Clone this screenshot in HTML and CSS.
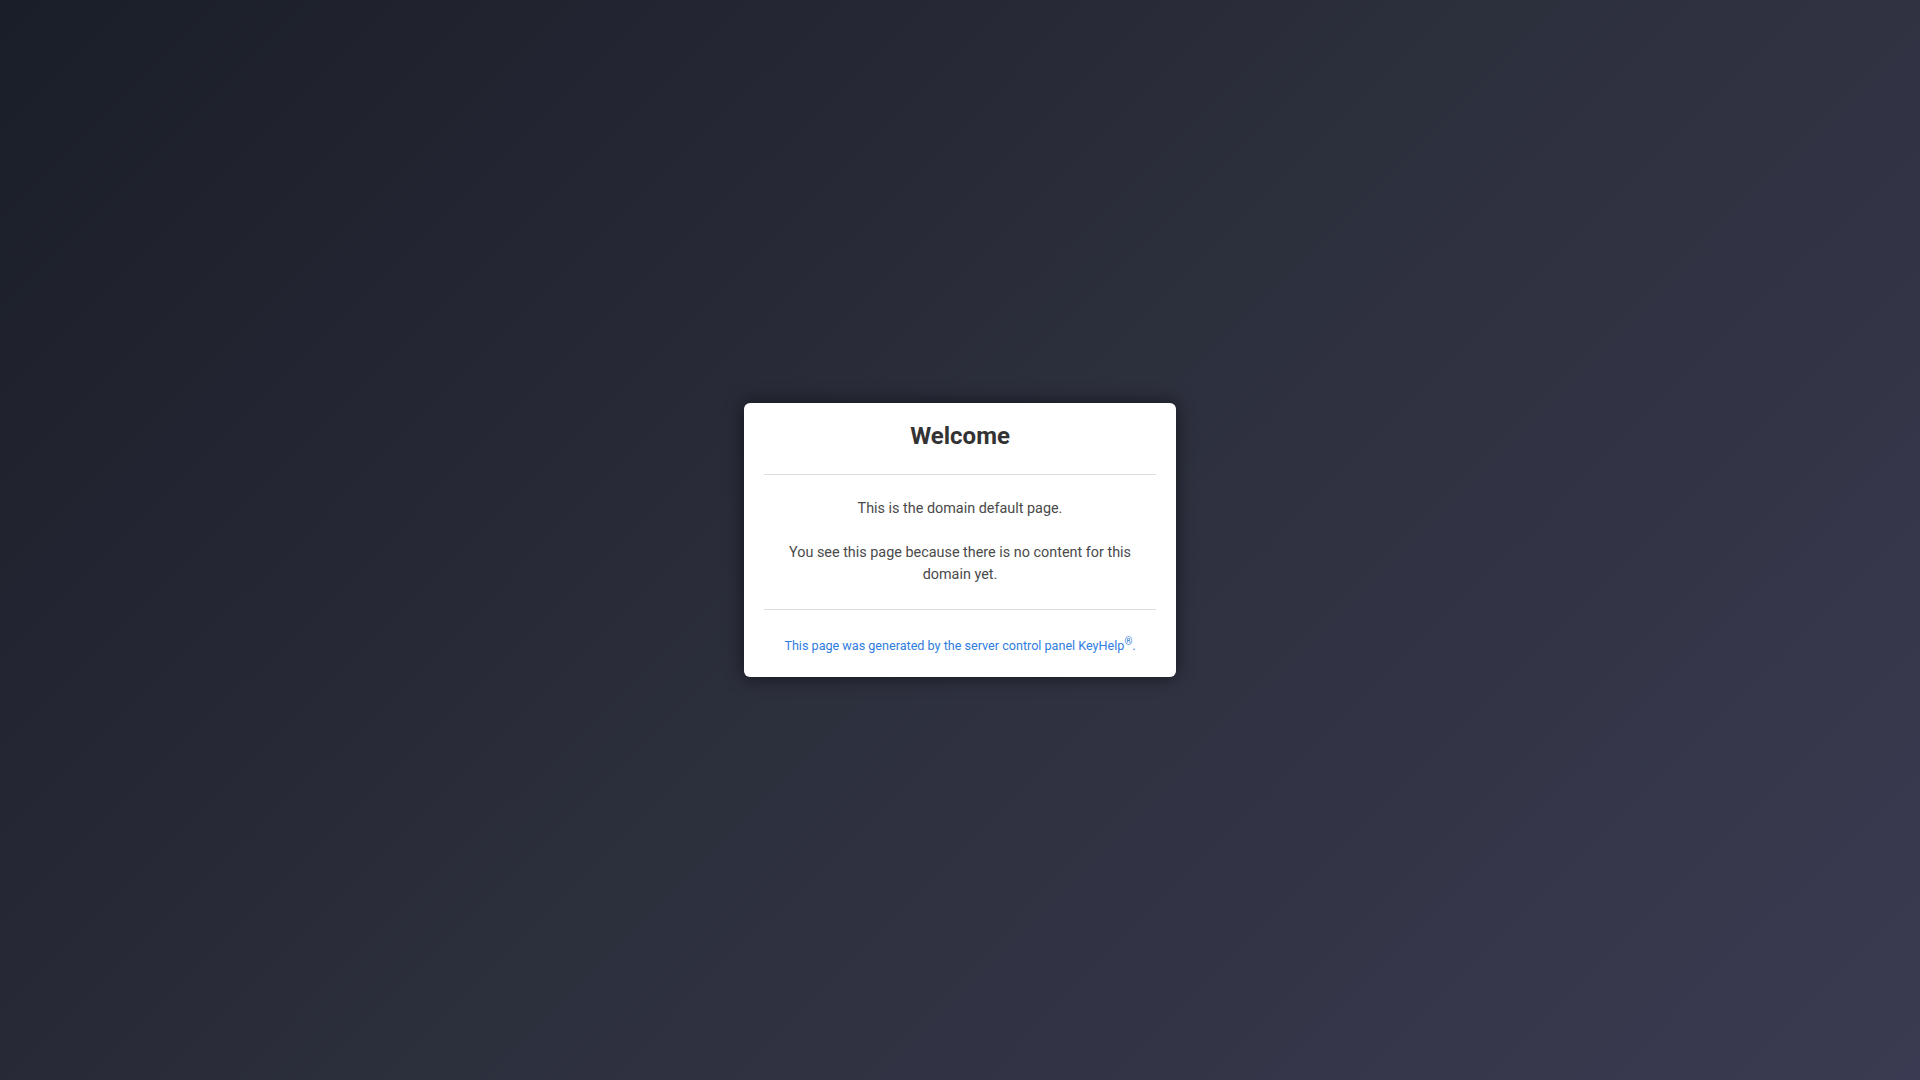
FILE: index.html
```html
<!DOCTYPE html>
<html lang="en">
<head>
<meta charset="utf-8">
<title>Welcome</title>
<link rel="stylesheet" href="styles.css">
</head>
<body>
<main class="stage">
  <section class="card">
    <h1 class="card-title">Welcome</h1>
    <hr class="divider">
    <div class="card-body">
      <p>This is the domain default page.</p>
      <p>You see this page because there is no content for this domain yet.</p>
    </div>
    <hr class="divider">
    <p class="card-footer"><a href="#">This page was generated by the server control panel KeyHelp<sup>®</sup>.</a></p>
  </section>
</main>
</body>
</html>
```

FILE: styles.css
```css
html, body {
  margin: 0;
  height: 100%;
}

body {
  font-family: Roboto, "Liberation Sans", Arial, sans-serif;
  background: linear-gradient(135deg, #1a1e28 0%, #2c2f3c 50%, #3a3b52 100%);
}

.stage {
  height: 100%;
  display: flex;
  align-items: center;
  justify-content: center;
}

.card {
  width: 432px;
  box-sizing: border-box;
  padding: 16px 20px 22px;
  background: #fff;
  border-radius: 6px;
  box-shadow: 0 0 18px rgba(0, 0, 0, 0.55);
  text-align: center;
}

.card-title {
  margin: 0 0 21px;
  font-size: 24px;
  line-height: 34px;
  font-weight: 700;
  color: #333;
}

.divider {
  margin: 0;
  border: 0;
  border-top: 1px solid #dcdcdc;
}

.card-body {
  padding: 23px 16px 23px;
  font-size: 14.4px;
  line-height: 22px;
  color: #4a4a4a;
}

.card-body p {
  margin: 0;
}

.card-body p + p {
  margin-top: 22px;
}

.card-footer {
  margin: 27px 0 0;
  font-size: 12.6px;
  line-height: 18px;
}

.card-footer a {
  color: #2f7de1;
  text-decoration: none;
}

.card-footer sup {
  font-size: 10px;
  line-height: 0;
}
```
